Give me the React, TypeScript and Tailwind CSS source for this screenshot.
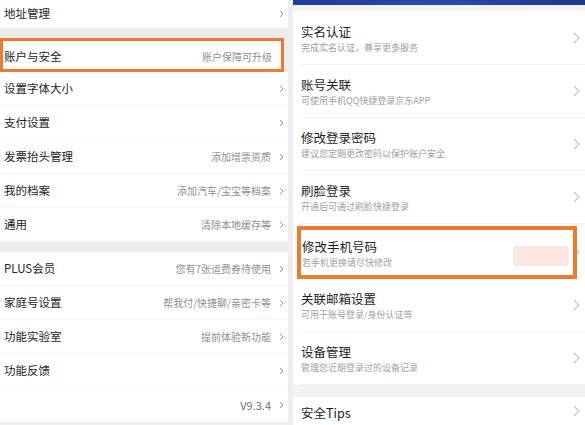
import React from "react";

const font = { fontFamily: '"Noto Sans CJK SC", "Noto Sans", sans-serif' };

function ChevL() {
  return (
    <svg width="5" height="8" viewBox="0 0 5 8" className="shrink-0">
      <path d="M1 1 L4 4 L1 7" fill="none" stroke="#9a9a9a" strokeWidth="1" />
    </svg>
  );
}

function ChevR() {
  return (
    <svg width="7" height="12" viewBox="0 0 7 12" className="shrink-0">
      <path d="M1 1 L6 6 L1 11" fill="none" stroke="#c4c4c4" strokeWidth="1.1" />
    </svg>
  );
}

type LRow = { t: string; v?: string; chev?: boolean };

function LeftRow({ t, v, chev = true }: LRow) {
  return (
    <div className="h-[34px] flex items-center pl-[4px] pr-[4px] border-b border-[#f5f5f5] bg-white">
      <span className="text-[11.5px] text-[#222] leading-none">{t}</span>
      <div className="flex-1" />
      {v && <span className="text-[10px] text-[#8f8f8f] leading-none mr-[8px]">{v}</span>}
      {chev && <ChevL />}
    </div>
  );
}

type RRow = { t: string; s: string };

function RightRow({ t, s }: RRow) {
  return (
    <div className="h-[53px] flex items-start pl-[8px] bg-white">
      <div className="flex-1 h-full flex items-start border-b border-[#f0f0f0] pr-[5px]">
        <div className="flex-1 pt-[12px]">
          <div className="text-[12.5px] leading-[16px] text-[#1e1e1e]">{t}</div>
          <div className="mt-[2px] text-[9px] leading-[12px] text-[#a0a0a0]">{s}</div>
        </div>
        <div className="self-center">
          <ChevR />
        </div>
      </div>
    </div>
  );
}

export default function App() {
  return (
    <div className="w-[585px] h-[425px] overflow-hidden flex bg-[#efefef]" style={font}>
      {/* Left panel */}
      <div className="w-[288px] flex flex-col bg-[#efefef]">
        <div className="h-[28px] flex items-center pl-[4px] pr-[4px] bg-white">
          <span className="text-[11.5px] text-[#222] leading-none">地址管理</span>
          <div className="flex-1" />
          <ChevL />
        </div>
        <div className="h-[10px] bg-[#ececec]" />
        <div className="h-[34px] flex items-center pl-[1px] pr-[9px] bg-white border-[3px] border-[#ee7a2e] mr-[4px]">
          <span className="text-[11.5px] text-[#222] leading-none mt-[3px]">账户与安全</span>
          <div className="flex-1" />
          <span className="text-[10px] text-[#8f8f8f] leading-none mt-[3px]">账户保障可升级</span>
        </div>
        <LeftRow t="设置字体大小" />
        <LeftRow t="支付设置" />
        <LeftRow t="发票抬头管理" v="添加增票资质" />
        <LeftRow t="我的档案" v="添加汽车/宝宝等档案" />
        <LeftRow t="通用" v="清除本地缓存等" />
        <div className="h-[10px] bg-[#ececec]" />
        <LeftRow t="PLUS会员" v="您有7张运费券待使用" />
        <LeftRow t="家庭号设置" v="帮我付/快捷聊/亲密卡等" />
        <LeftRow t="功能实验室" v="提前体验新功能" />
        <LeftRow t="功能反馈" />
        <div className="h-[34px] flex items-center pl-[4px] pr-[4px] bg-white">
          <div className="flex-1" />
          <span className="text-[11px] text-[#707070] leading-none mr-[8px]">V9.3.4</span>
          <ChevL />
        </div>
      </div>

      <div className="w-[5px] bg-[#eeeeee]" />

      {/* Right panel */}
      <div className="flex-1 flex flex-col bg-white">
        <div className="h-[5px] bg-gradient-to-r from-[#1d3c97] via-[#2a4aa8] to-[#1b3891]" />
        <div className="h-[6px] bg-[#f4f4f4]" />
        <div className="h-[1px]" />
        <RightRow t="实名认证" s="完成实名认证，尊享更多服务" />
        <RightRow t="账号关联" s="可使用手机QQ快捷登录京东APP" />
        <RightRow t="修改登录密码" s="建议您定期更改密码以保护账户安全" />
        <RightRow t="刷脸登录" s="开通后可通过刷脸快捷登录" />
        <div className="relative h-[55px] flex items-center bg-white">
          <div className="flex-1 h-full pl-[9px] pt-[15px]">
            <div className="text-[12.5px] leading-[16px] text-[#1e1e1e]">修改手机号码</div>
            <div className="mt-[2px] text-[9px] leading-[12px] text-[#a0a0a0]">若手机更换请尽快修改</div>
          </div>
          <div className="pr-[5px]">
            <ChevR />
          </div>
          <div className="absolute left-[220px] top-[22px] w-[56px] h-[20px] bg-[#fde4da] opacity-90 rounded-[2px]" />
          <div className="absolute left-[4px] right-[8px] top-[2px] bottom-[0px] border-[4px] border-[#ee7a2e]" />
        </div>
        <RightRow t="关联邮箱设置" s="可用于账号登录/身份认证等" />
        <RightRow t="设备管理" s="管理您近期登录过的设备记录" />
        <div className="h-[12px] bg-[#f2f2f2]" />
        <div className="flex-1 flex items-start pl-[8px] pr-[5px] pt-[8px] bg-white">
          <span className="flex-1 text-[12.5px] leading-[16px] text-[#1e1e1e]">安全Tips</span>
          <ChevR />
        </div>
      </div>
    </div>
  );
}
